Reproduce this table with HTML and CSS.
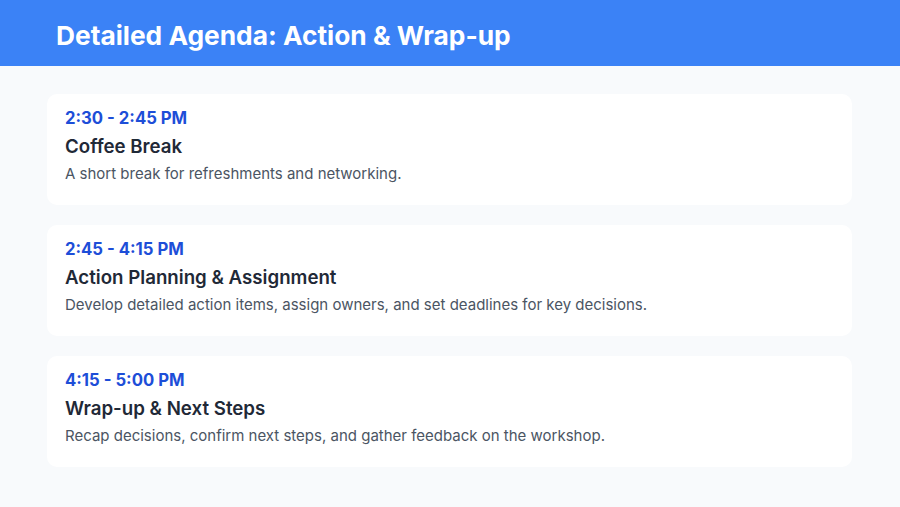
FILE: index.html
```html
<!DOCTYPE html>
<html lang="en">
<head>
<meta charset="utf-8">
<link rel="stylesheet" href="styles.css">
</head>
<body>
<header class="header">
  <h1 class="title">Detailed Agenda: Action &amp; Wrap-up</h1>
</header>
<main class="content">
  <section class="card">
    <div class="time">2:30 - 2:45 PM</div>
    <h2 class="item-title">Coffee Break</h2>
    <p class="desc">A short break for refreshments and networking.</p>
  </section>
  <section class="card">
    <div class="time">2:45 - 4:15 PM</div>
    <h2 class="item-title">Action Planning &amp; Assignment</h2>
    <p class="desc">Develop detailed action items, assign owners, and set deadlines for key decisions.</p>
  </section>
  <section class="card">
    <div class="time">4:15 - 5:00 PM</div>
    <h2 class="item-title">Wrap-up &amp; Next Steps</h2>
    <p class="desc">Recap decisions, confirm next steps, and gather feedback on the workshop.</p>
  </section>
</main>
</body>
</html>
```
FILE: styles.css
```css
* { box-sizing: border-box; }
html, body { margin: 0; padding: 0; }
body {
  width: 900px;
  height: 507px;
  background: #f8fafc;
  font-family: Inter, "Noto Sans", sans-serif;
  overflow: hidden;
}
.header {
  background: #3b82f6;
  height: 66px;
  display: flex;
  align-items: center;
  padding: 5px 56px 0;
}
.title {
  margin: 0;
  color: #ffffff;
  font-size: 26.3px;
  font-weight: 700;
}
.content {
  padding: 28px 48px 0 47px;
  display: flex;
  flex-direction: column;
  gap: 20px;
}
.card {
  background: #ffffff;
  border-radius: 10px;
  height: 111px;
  padding: 12px 18px;
}
.time {
  color: #1d4ed8;
  font-size: 16.7px;
  font-weight: 700;
  line-height: 24px;
}
.item-title {
  margin: 4px 0 0;
  color: #1f2937;
  font-size: 18.7px;
  font-weight: 600;
  line-height: 26px;
}
.desc {
  margin: 3px 0 0;
  color: #4b5563;
  font-size: 15px;
  line-height: 22px;
}
```
